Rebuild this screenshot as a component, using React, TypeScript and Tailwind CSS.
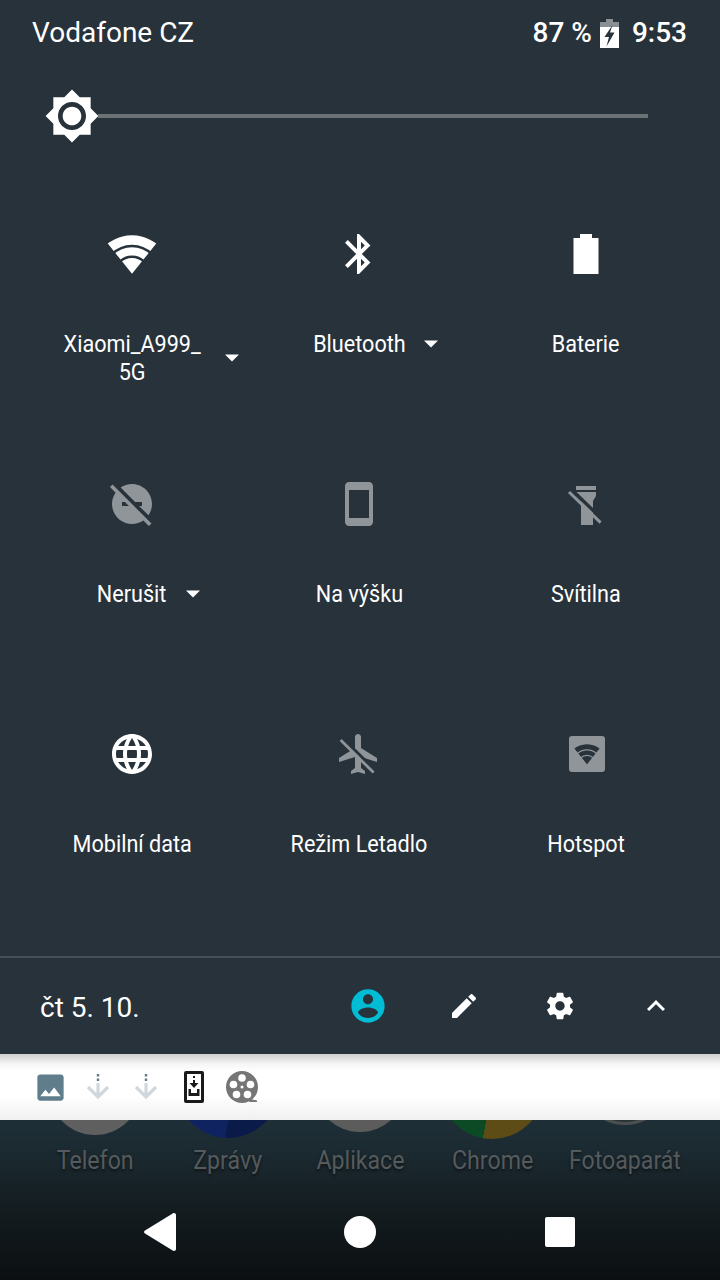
import type { ReactNode } from 'react';

const WHITE = 'fill-white';
const GREY = 'fill-[#8f9599]';

function Glyph({ d, className }: { d: string; className: string }) {
  return (
    <svg viewBox="0 0 24 24" className={className}>
      <path d={d} />
    </svg>
  );
}

function WifiFan({ fill, gap, className }: { fill: string; gap: string; className: string }) {
  return (
    <svg viewBox="0 0 24 24" className={className}>
      <path className={fill} d="M12 21.5L23.64 7C23.2 6.66 18.7 3 12 3S.8 6.66.36 7L12 21.5z" />
      <circle cx="12" cy="21.5" r="13.4" fill="none" strokeWidth="1.2" className={gap} />
      <circle cx="12" cy="21.5" r="8.2" fill="none" strokeWidth="1.2" className={gap} />
    </svg>
  );
}

function Flashlight() {
  return (
    <svg viewBox="0 0 24 24" className="h-12 w-12">
      <path className={GREY} d="M7 3h10v2H7zM7 6h10v2l-1.500 2.500V22.500H9.500V10.500L7 8z" />
      <path d="M5 5L21 20.500" strokeWidth="1.700" className="stroke-[#27323b]" />
      <path d="M3.500 6L19.300 21.300" strokeWidth="1.500" className="stroke-[#8f9599]" />
    </svg>
  );
}

function PlaneOff() {
  return (
    <svg viewBox="0 0 24 24" className="h-12 w-12">
      <path
        className={GREY}
        d="M21 16v-2l-8-5V3.500c0-.830-.670-1.500-1.500-1.500S10 2.670 10 3.500V9l-8 5v2l8-2.500V19l-2 1.500V22l3.500-1 3.500 1v-1.500L13 19v-5.500l8 2.500z"
      />
      <path d="M4 4.300L20 20" strokeWidth="1.500" className="stroke-[#27323b]" />
      <path d="M2.800 5L19.300 21.300" strokeWidth="1.400" className="stroke-[#8f9599]" />
    </svg>
  );
}

function Tile({ icon, label, caretClass }: { icon: ReactNode; label: ReactNode; caretClass?: string }) {
  return (
    <div className="flex h-[250px] flex-col items-center pt-6">
      <div className="flex h-12 w-12 items-center justify-center">{icon}</div>
      <div className="relative mt-[52px] text-center text-[24px] leading-[28px] text-white">
        <span className="inline-block scale-x-[0.9] whitespace-nowrap">{label}</span>
        {caretClass && (
          <span
            className={`absolute top-1/2 left-full h-0 w-0 -translate-y-1/2 border-x-[7px] border-t-[7px] border-x-transparent border-t-white ${caretClass}`}
          />
        )}
      </div>
    </div>
  );
}

function DownloadArrow() {
  return (
    <svg viewBox="0 0 24 26" className="h-[26px] w-[24px]">
      <path d="M10.800 0h2.400v2.400h-2.400zM10.800 4.500h2.400v2.400h-2.400z" className="fill-[#607d8b]" />
      <path d="M12 9v14M2 13l10 10 10-10" fill="none" strokeWidth="3.200" className="stroke-[#cfd8dc]" />
    </svg>
  );
}

function DockApp({ label, bubble }: { label: string; bubble: ReactNode }) {
  return (
    <div className="flex flex-col items-center">
      <div className="flex h-6 w-full items-end justify-center overflow-hidden">{bubble}</div>
      <span className="mt-[2px] inline-block scale-x-[0.89] whitespace-nowrap text-[26px] leading-[28px] text-[#555a5c] [text-shadow:0_2px_3px_rgba(0,0,0,0.5)]">
        {label}
      </span>
    </div>
  );
}

export default function App() {
  return (
    <div className="flex h-[1280px] w-[720px] flex-col overflow-hidden bg-[#27323b] [font-family:Roboto,sans-serif]">
      {/* status bar */}
      <div className="flex h-[66px] shrink-0 items-center justify-between pr-[33px] pl-[32px] text-[28px] text-white">
        <span>Vodafone CZ</span>
        <div className="flex items-center font-medium">
          <span>87 %</span>
          <svg viewBox="0 0 19 29" className="mr-[13px] ml-[8px] h-[29px] w-[19px]">
            <path d="M6 0h7v3h6v5H0V3h6z" className="fill-[#8a8f93]" />
            <path d="M0 8h19v21H0z" className="fill-white" />
            <path d="M12.500 6L4.500 18h4.500l-2.500 9.500 8-14h-4.500z" className="fill-[#27323b]" />
          </svg>
          <span>9:53</span>
        </div>
      </div>

      {/* brightness */}
      <div className="flex h-[140px] shrink-0 items-start pt-[22px] pl-[44px]">
        <Glyph
          className="h-14 w-14 shrink-0 fill-white"
          d="M20 8.69V4h-4.69L12 .69 8.69 4H4v4.69L.69 12 4 15.31V20h4.69L12 23.31 15.31 20H20v-4.69L23.31 12 20 8.69zM12 18c-3.31 0-6-2.69-6-6s2.690-6 6-6 6 2.690 6 6-2.690 6-6 6zm0-10c-2.210 0-4 1.790-4 4s1.790 4 4 4 4-1.790 4-4-1.790-4-4-4z"
        />
        <div className="mt-[26px] -ml-[2px] h-1 w-[550px] bg-[#6b7377]" />
      </div>

      {/* tiles */}
      <div className="grid shrink-0 grid-cols-[227px_227px_227px] pl-[18.5px]">
        <Tile
          icon={<WifiFan fill={WHITE} gap="stroke-[#27323b]" className="h-[50px] w-[50px] shrink-0" />}
          label={
            <>
              Xiaomi_A999_
              <br />
              5G
            </>
          }
          caretClass="ml-[17px]"
        />
        <Tile
          icon={
            <Glyph
              className={`h-12 w-12 ${WHITE}`}
              d="M17.710 7.710L12 2h-1v7.590L6.410 5 5 6.410 10.590 12 5 17.590 6.410 19 11 14.410V22h1l5.710-5.710-4.300-4.290 4.300-4.290zM13 5.830l1.880 1.880L13 9.590V5.830zm1.880 10.460L13 18.170v-3.760l1.880 1.880z"
            />
          }
          label="Bluetooth"
          caretClass="ml-[14px]"
        />
        <Tile
          icon={
            <Glyph className={`h-12 w-12 ${WHITE}`} d="M9 4V2h6v2h3.250v18H5.750V4z" />
          }
          label="Baterie"
        />
        <Tile
          icon={
            <Glyph
              className={`h-12 w-12 ${GREY}`}
              d="M17 11v2h-1.460l4.680 4.680C21.340 16.070 22 14.110 22 12c0-5.520-4.480-10-10-10-2.110 0-4.070.660-5.680 1.780L13.540 11H17zM2.270 2.270L1 3.540l2.780 2.780C2.660 7.930 2 9.890 2 12c0 5.520 4.480 10 10 10 2.110 0 4.070-.660 5.680-1.780L20.460 23l1.270-1.270L11 11 2.270 2.270zM7 13v-2h1.460l2 2H7z"
            />
          }
          label="Nerušit"
          caretClass="ml-[15px]"
        />
        <Tile
          icon={
            <Glyph
              className={`h-12 w-12 ${GREY}`}
              d="M17 1.010L7 1c-1.100 0-2 .900-2 2v18c0 1.100.900 2 2 2h10c1.100 0 2-.900 2-2V3c0-1.100-.900-1.990-2-1.990zM17 19H7V5h10v14z"
            />
          }
          label="Na výšku"
        />
        <Tile icon={<Flashlight />} label="Svítilna" />
        <Tile
          icon={
            <Glyph
              className={`h-12 w-12 ${WHITE}`}
              d="M11.990 2C6.470 2 2 6.480 2 12s4.470 10 9.990 10C17.520 22 22 17.520 22 12S17.520 2 11.990 2zm6.930 6h-2.950c-.320-1.250-.780-2.450-1.380-3.560 1.840.630 3.370 1.910 4.330 3.560zM12 4.040c.830 1.200 1.480 2.530 1.910 3.960h-3.820c.430-1.430 1.080-2.760 1.910-3.960zM4.260 14C4.100 13.360 4 12.690 4 12s.100-1.360.260-2h3.380c-.080.660-.140 1.320-.140 2 0 .680.060 1.340.140 2H4.260zm.820 2h2.950c.320 1.250.780 2.450 1.380 3.560-1.840-.630-3.370-1.900-4.330-3.560zm2.950-8H5.080c.960-1.660 2.490-2.930 4.330-3.560C8.810 5.550 8.350 6.750 8.030 8zM12 19.960c-.830-1.200-1.480-2.530-1.910-3.960h3.820c-.430 1.430-1.080 2.760-1.910 3.960zM14.340 14H9.660c-.090-.660-.160-1.320-.160-2 0-.680.070-1.350.160-2h4.680c.090.650.160 1.320.160 2 0 .680-.070 1.340-.160 2zm.250 5.560c.600-1.110 1.060-2.310 1.380-3.560h2.950c-.960 1.650-2.490 2.930-4.330 3.560zM16.360 14c.080-.660.140-1.320.140-2 0-.680-.060-1.340-.140-2h3.380c.160.640.260 1.310.260 2s-.100 1.360-.260 2h-3.380z"
            />
          }
          label="Mobilní data"
        />
        <Tile icon={<PlaneOff />} label="Režim Letadlo" />
        <Tile
          icon={
            <div className="ml-[1px] flex h-9 w-9 items-center justify-center rounded-[3px] bg-[#8f9599]">
              <WifiFan fill="fill-[#27323b]" gap="stroke-[#8f9599]" className="h-[26px] w-[26px]" />
            </div>
          }
          label="Hotspot"
        />
      </div>

      {/* date and actions */}
      <div className="flex h-[98px] shrink-0 items-center border-t-2 border-[#475056] pr-4 pl-10">
        <span className="flex-1 pt-[4px] text-[28px] text-white">čt 5. 10.</span>
        <div className="flex w-24 justify-center">
          <Glyph
            className="h-10 w-10 fill-[#00bcd4]"
            d="M12 2C6.480 2 2 6.480 2 12s4.480 10 10 10 10-4.480 10-10S17.520 2 12 2zm0 3c1.660 0 3 1.340 3 3s-1.340 3-3 3-3-1.340-3-3 1.340-3 3-3zm0 14.200c-2.500 0-4.710-1.280-6-3.220.030-1.990 4-3.080 6-3.080 1.990 0 5.970 1.090 6 3.080-1.290 1.940-3.500 3.220-6 3.220z"
          />
        </div>
        <div className="flex w-24 justify-center">
          <Glyph
            className="h-8 w-8 fill-white"
            d="M3 17.250V21h3.750L17.810 9.940l-3.750-3.750L3 17.250zM20.710 7.040c.390-.390.390-1.020 0-1.410l-2.340-2.340c-.390-.390-1.020-.390-1.410 0l-1.830 1.830 3.750 3.750 1.830-1.830z"
          />
        </div>
        <div className="flex w-24 justify-center">
          <Glyph
            className="h-8 w-8 fill-white"
            d="M19.430 12.980c.040-.320.070-.640.070-.980s-.030-.660-.070-.980l2.110-1.650c.190-.150.240-.420.120-.640l-2-3.460c-.120-.220-.390-.300-.610-.220l-2.490 1c-.520-.400-1.080-.730-1.690-.980l-.380-2.650C14.460 2.180 14.250 2 14 2h-4c-.250 0-.460.180-.490.420l-.380 2.650c-.610.250-1.170.590-1.690.980l-2.490-1c-.230-.090-.490 0-.610.220l-2 3.460c-.130.220-.070.490.120.640l2.110 1.650c-.040.320-.070.650-.070.980s.030.660.07.980l-2.110 1.650c-.190.150-.240.420-.120.640l2 3.460c.120.220.390.300.610.220l2.490-1c.520.400 1.080.730 1.690.980l.380 2.650c.030.240.240.420.490.420h4c.250 0 .460-.180.490-.420l.380-2.650c.610-.250 1.170-.590 1.690-.980l2.490 1c.230.090.490 0 .610-.220l2-3.460c.120-.220.070-.490-.120-.640l-2.110-1.650zM12 15.500c-1.930 0-3.500-1.570-3.500-3.500s1.570-3.500 3.500-3.500 3.500 1.570 3.500 3.500-1.570 3.500-3.500 3.500z"
          />
        </div>
        <div className="flex w-24 justify-center">
          <Glyph className="h-9 w-9 fill-white" d="M12 8l-6 6 1.410 1.410L12 10.830l4.590 4.580L18 14z" />
        </div>
      </div>

      {/* collapsed notification icons */}
      <div className="flex h-[66px] shrink-0 items-center bg-[linear-gradient(to_bottom,#cfcfcf_0px,#f6f6f6_10px,#ffffff_18px,#ffffff_42px,#f0f0f0_66px)] pl-[26px]">
        <div className="flex w-12 justify-center">
          <Glyph
            className="h-[35px] w-[35px] fill-[#607d8b]"
            d="M21 19V5c0-1.100-.900-2-2-2H5c-1.100 0-2 .900-2 2v14c0 1.100.900 2 2 2h14c1.100 0 2-.900 2-2zM8.500 13.500l2.500 3.010L14.500 12l4.500 6H5l3.500-4.500z"
          />
        </div>
        <div className="flex w-12 justify-center">
          <DownloadArrow />
        </div>
        <div className="flex w-12 justify-center">
          <DownloadArrow />
        </div>
        <div className="flex w-12 justify-center">
          <svg viewBox="0 0 20 32" className="h-8 w-5">
            <rect width="20" height="32" rx="2" className="fill-[#1a1a1a]" />
            <rect x="3" y="3" width="14" height="26" className="fill-white" />
            <path d="M9 5h2v2H9zM9 9h2v3h3.500l-4.500 5-4.500-5H9z" className="fill-[#1a1a1a]" />
            <path d="M4.500 18h2.500v4h6v-4h2.500v7h-11z" className="fill-[#1a1a1a]" />
          </svg>
        </div>
        <div className="flex w-12 justify-center">
          <svg viewBox="0 0 32 32" className="h-8 w-8">
            <path d="M24 28l7 1.500v1.500h-8z" className="fill-[#757575]" />
            <circle cx="16" cy="16" r="16" className="fill-[#757575]" />
            <circle cx="16" cy="7" r="3.800" className="fill-white" />
            <circle cx="24.500" cy="13.500" r="3.800" className="fill-white" />
            <circle cx="21.500" cy="23.500" r="3.800" className="fill-white" />
            <circle cx="10.500" cy="23.500" r="3.800" className="fill-white" />
            <circle cx="7.500" cy="13.500" r="3.800" className="fill-white" />
            <circle cx="16" cy="16" r="1.500" className="fill-white" />
          </svg>
        </div>
      </div>

      {/* launcher behind the panel */}
      <div className="flex flex-1 flex-col bg-[linear-gradient(to_bottom,#1f2f37_0%,#1b2a31_20%,#151e22_50%,#0b0f11_100%)]">
        <div className="grid h-[80px] shrink-0 grid-cols-5 px-[29px]">
          <DockApp
            label="Telefon"
            bubble={<div className="mb-[9px] h-[92px] w-[92px] shrink-0 rounded-full bg-[#5f5f5f]" />}
          />
          <DockApp
            label="Zprávy"
            bubble={
              <div className="mb-[6px] h-[104px] w-[104px] shrink-0 rounded-full bg-[linear-gradient(100deg,#0e2360_55%,#0a1b49_55%)]" />
            }
          />
          <DockApp
            label="Aplikace"
            bubble={<div className="mb-[12px] h-[92px] w-[92px] shrink-0 rounded-full bg-[#5c5c5c]" />}
          />
          <DockApp
            label="Chrome"
            bubble={
              <div className="mb-[5px] h-[104px] w-[104px] shrink-0 rounded-full bg-[linear-gradient(100deg,#0b4a25_50%,#5e4c16_50%)]" />
            }
          />
          <DockApp
            label="Fotoaparát"
            bubble={
              <div className="mb-[19px] h-[92px] w-[92px] shrink-0 rounded-full border-[3px] border-[#4b4f50] bg-[#2a3336]" />
            }
          />
        </div>
        <div className="grid flex-1 grid-cols-3 items-center px-[60px] pb-[16px]">
          <div className="flex justify-center">
            <svg viewBox="0 0 32 38" className="h-[38px] w-8">
              <path d="M30 0c1 0 2 .8 2 2v34c0 1.200-1 2-2 2-.5 0-1-.2-1.300-.4L1 20.500c-1.300-.8-1.300-2.200 0-3L28.700.4C29 .2 29.500 0 30 0z" className="fill-white" />
            </svg>
          </div>
          <div className="flex justify-center">
            <div className="h-8 w-8 rounded-full bg-white" />
          </div>
          <div className="flex justify-center">
            <div className="h-[30px] w-[30px] rounded-[2px] bg-white" />
          </div>
        </div>
      </div>
    </div>
  );
}
